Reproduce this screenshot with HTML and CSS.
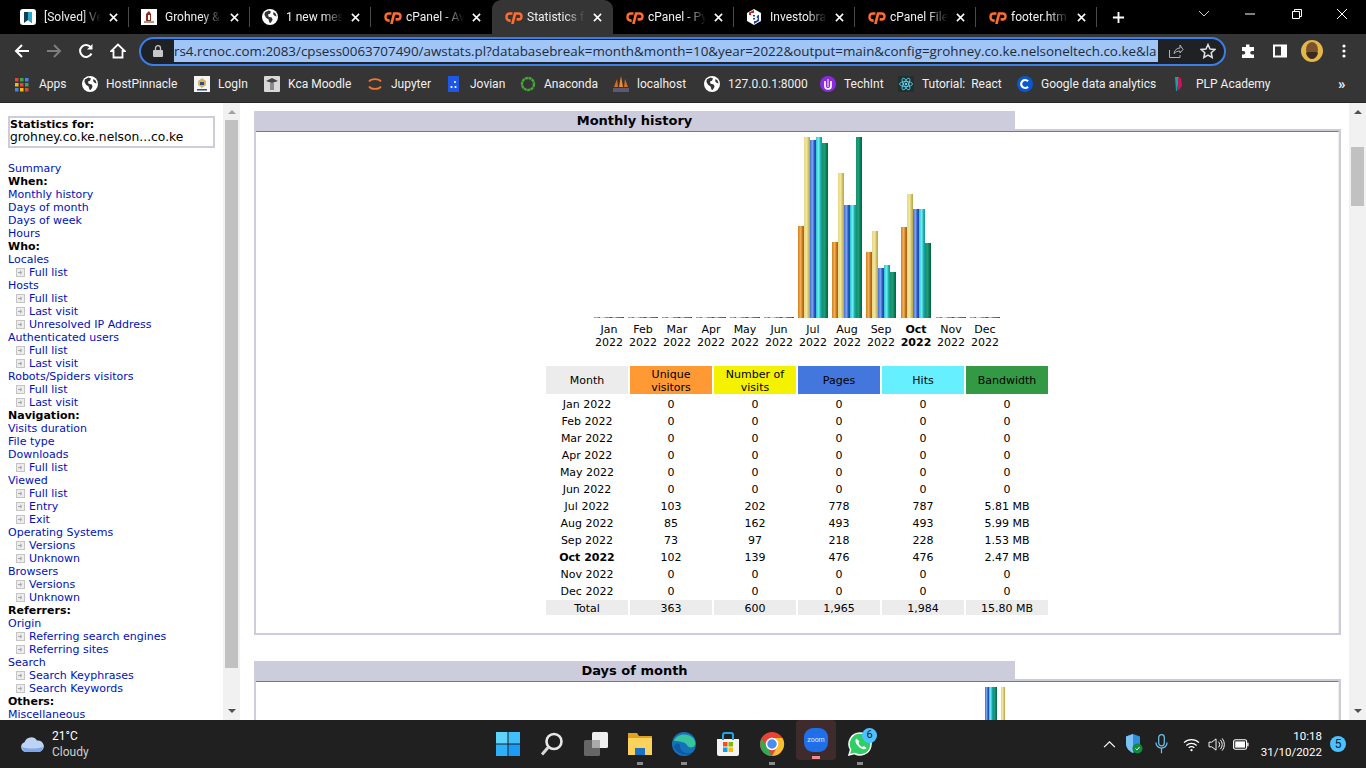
FILE: index.html
```html
<!DOCTYPE html>
<html lang="en">
<head>
<meta charset="utf-8">
<title>Statistics for grohney.co.ke</title>
<link rel="stylesheet" href="styles.css">
</head>
<body>
<svg class="defs" width="0" height="0" aria-hidden="true">
  <symbol id="cp" viewBox="0 0 16 12">
    <path d="M6.600 2.300H4.200a3.300 3.300 0 0 0 0 6.600H4.900" fill="none" stroke="#ff6c2c" stroke-width="2.500"/>
    <path d="M6.500 12 9 2.300h3.400a2.600 2.600 0 0 1 0 5.400H10.400" fill="none" stroke="#ff6c2c" stroke-width="2.500"/>
  </symbol>
  <symbol id="globe" viewBox="0 0 16 16">
    <circle cx="8" cy="8" r="8" fill="#fff"/>
    <path d="M3 3.200 6.800 1.400l2.200 1.200-1 2.200-2 .6.600 2.400 3.200.8.800 2.200-2 3.200-1.200-.4-.8-3-2.600-1.800-1.600-3zM11.400 3l2.200 1.600 1 3-1.600-.6-1.800-1.600z" fill="#353535"/>
  </symbol>
  <symbol id="close" viewBox="0 0 10 10">
    <path d="M1 1l8 8M9 1l-8 8" stroke="#fff" stroke-width="1.700" fill="none"/>
  </symbol>
  <symbol id="mini" viewBox="0 0 9 9">
    <rect x=".5" y=".5" width="8" height="8" fill="#ededed" stroke="#c4c4c4"/>
    <path d="M2 4.500h3M4 2.800l2 1.700-2 1.700" stroke="#a6a6a6" fill="none"/>
  </symbol>
</svg>

<div class="app">
  <header class="tabs">
    <div class="tab">
      <svg class="fav" viewBox="0 0 16 16"><rect width="16" height="16" rx="3" fill="#fff"/><path d="M4 3h8v11l-4-3-4 3z" fill="#123f5c"/><path d="M8 3h4v11l-4-3z" fill="#2aa9c9"/></svg>
      <span class="title">[Solved] Ve</span><svg class="x" viewBox="0 0 10 10"><use href="#close"/></svg>
    </div>
    <div class="tab">
      <svg class="fav" viewBox="0 0 16 16"><rect width="16" height="16" fill="#fff"/><path d="M5 13V5l3-3 2 3v8z" fill="#8f2a22"/><path d="M3 14h10v-2H3z" fill="#a89a80"/><path d="M7 6h2v5H7z" fill="#fff"/></svg>
      <span class="title">Grohney &amp;</span><svg class="x" viewBox="0 0 10 10"><use href="#close"/></svg>
    </div>
    <div class="tab">
      <svg class="fav" viewBox="0 0 16 16"><use href="#globe"/></svg>
      <span class="title">1 new mes</span><svg class="x" viewBox="0 0 10 10"><use href="#close"/></svg>
    </div>
    <div class="tab tab-nosep">
      <svg class="fav fav-cp" viewBox="0 0 16 12"><use href="#cp"/></svg>
      <span class="title">cPanel - Av</span><svg class="x" viewBox="0 0 10 10"><use href="#close"/></svg>
    </div>
    <div class="tab tab-active">
      <svg class="fav fav-cp" viewBox="0 0 16 12"><use href="#cp"/></svg>
      <span class="title">Statistics fo</span><svg class="x" viewBox="0 0 10 10"><use href="#close"/></svg>
    </div>
    <div class="tab">
      <svg class="fav fav-cp" viewBox="0 0 16 12"><use href="#cp"/></svg>
      <span class="title">cPanel - Py</span><svg class="x" viewBox="0 0 10 10"><use href="#close"/></svg>
    </div>
    <div class="tab">
      <svg class="fav" viewBox="0 0 16 16"><path d="M8 0l7 4v8l-7 4-7-4V4z" fill="#fff"/><path d="M3 3.500 8 1v5H3z" fill="#c8202c"/><path d="M8 6h5v6l-5 3z" fill="#1f3f9e"/><path d="M5 4h5l2 2-1.500 2 1.500 2-2 2H5z" fill="#fff"/><path d="M7 6h2v1.400H7zM7 9h2v1.400H7z" fill="#1f3f9e"/></svg>
      <span class="title">Investobra</span><svg class="x" viewBox="0 0 10 10"><use href="#close"/></svg>
    </div>
    <div class="tab">
      <svg class="fav fav-cp" viewBox="0 0 16 12"><use href="#cp"/></svg>
      <span class="title">cPanel File</span><svg class="x" viewBox="0 0 10 10"><use href="#close"/></svg>
    </div>
    <div class="tab">
      <svg class="fav fav-cp" viewBox="0 0 16 12"><use href="#cp"/></svg>
      <span class="title">footer.htm</span><svg class="x" viewBox="0 0 10 10"><use href="#close"/></svg>
    </div>
    <svg class="plus" viewBox="0 0 14 14"><path d="M7 1v12M1 7h12" stroke="#fff" stroke-width="2"/></svg>
    <div class="winctl">
      <svg viewBox="0 0 46 14"><path d="M18 4l5 5 5-5" stroke="#ccc" fill="none"/></svg>
      <svg viewBox="0 0 46 14"><path d="M18 7h10" stroke="#fff"/></svg>
      <svg viewBox="0 0 46 14"><path d="M19.500 4.500h7v7h-7zM21.500 4.500v-2h7v7h-2" stroke="#fff" fill="none"/></svg>
      <svg viewBox="0 0 46 14"><path d="M18 2l10 10M28 2 18 12" stroke="#fff" fill="none"/></svg>
    </div>
  </header>

  <div class="toolbar">
    <span class="btn"><svg viewBox="0 0 16 16"><path d="M15 8H2M8 2 2 8l6 6" stroke="#fff" stroke-width="2" fill="none"/></svg></span>
    <span class="btn"><svg viewBox="0 0 16 16"><path d="M1 8h13M8 2l6 6-6 6" stroke="#7d7d7d" stroke-width="2" fill="none"/></svg></span>
    <span class="btn"><svg viewBox="0 0 16 16"><path d="M13.500 10.500A6 6 0 1 1 13 4.500" stroke="#fff" stroke-width="2" fill="none"/><path d="M14.500 1v5.500H9z" fill="#fff"/></svg></span>
    <span class="btn"><svg viewBox="0 0 16 16"><path d="M8 1.500 1.200 8H3.500v6.500h9V8h2.300z" stroke="#fff" stroke-width="1.800" fill="none"/></svg></span>
    <div class="urlbar">
      <svg class="lock" viewBox="0 0 10 12"><rect y="5" width="10" height="7" rx="1" fill="#c4c7c5"/><path d="M2.500 5V3.200a2.500 2.500 0 0 1 5 0V5" stroke="#c4c7c5" stroke-width="1.300" fill="none"/></svg>
      <div class="urlclip"><span class="urltext">rs4.rcnoc.com:2083/cpsess0063707490/awstats.pl?databasebreak=month&amp;month=10&amp;year=2022&amp;output=main&amp;config=grohney.co.ke.nelsoneltech.co.ke&amp;la</span></div>
      <svg class="share" viewBox="0 0 16 16"><path d="M1.500 7v7.500h10.500V12M6 10.500C6.500 7 9 5 12 5V2l3 4.500L12 10V8c-2.500 0-4.500 1-6 2.500z" stroke="#b5b5b5" fill="none"/></svg>
      <svg class="star" viewBox="0 0 16 16"><path d="M8 1.500l2 4.500 4.800.5-3.600 3.200 1 4.800L8 12.100l-4.200 2.400 1-4.800L1.200 6.500 6 6z" stroke="#e3e3e3" stroke-width="1.500" fill="none"/></svg>
    </div>
    <span class="btn btn-first"><svg viewBox="0 0 16 16"><path d="M6 1.500h3.500V4H14v4h-2a1.800 1.800 0 0 0 0 3.600h2V15H2v-3.500h1.500a1.800 1.800 0 0 0 0-3.600H2V4h4z" fill="#fff"/></svg></span>
    <span class="btn"><svg viewBox="0 0 16 16"><rect x="1" y="1.500" width="14" height="13" fill="#fff"/><rect x="3" y="3.500" width="6" height="9" fill="#353535"/></svg></span>
    <span class="btn"><svg class="avatar" viewBox="0 0 22 22"><circle cx="11" cy="11" r="11" fill="#e2b649"/><ellipse cx="11" cy="10" rx="6" ry="8" fill="#7a5230"/><path d="M5 13c2 8 10 8 12 0l-2-1H7z" fill="#3a2a1e"/></svg></span>
    <span class="btn"><svg viewBox="0 0 16 16"><circle cx="8" cy="3" r="1.600" fill="#fff"/><circle cx="8" cy="8" r="1.600" fill="#fff"/><circle cx="8" cy="13" r="1.600" fill="#fff"/></svg></span>
  </div>

  <nav class="bookmarks">
    <span class="bm"><svg class="bmi" viewBox="0 0 16 16"><path d="M0 2h3.500v3.500H0z" fill="#ea4335"/><path d="M5 2h3.500v3.500H5z" fill="#34a853"/><path d="M10 2h3.500v3.500H10z" fill="#4285f4"/><path d="M0 7h3.500v3.500H0z" fill="#fbbc04"/><path d="M5 7h3.500v3.500H5z" fill="#ea4335"/><path d="M10 7h3.500v3.500H10z" fill="#34a853"/><path d="M0 12h3.500v3.500H0z" fill="#4285f4"/><path d="M5 12h3.500v3.500H5z" fill="#fbbc04"/><path d="M10 12h3.500v3.500H10z" fill="#ea4335"/></svg>Apps</span>
    <span class="bm"><svg class="bmi" viewBox="0 0 16 16"><use href="#globe"/></svg>HostPinnacle</span>
    <span class="bm"><svg class="bmi" viewBox="0 0 16 16"><rect width="16" height="16" fill="#f4f4f4"/><path d="M8 2l4 3v4l-4 3-4-3V5z" fill="#d7b658"/><path d="M6 6h4v3H6z" fill="#2e4b8f"/><path d="M3 13h10v1.500H3z" fill="#2e4b8f"/></svg>LogIn</span>
    <span class="bm"><svg class="bmi" viewBox="0 0 16 16"><rect width="16" height="16" rx="1" fill="#d8d8d8"/><path d="M2 5l6-3 6 3-6 2z" fill="#444"/><path d="M6 7h4v7H6z" fill="#8a8a8a"/></svg>Kca Moodle</span>
    <span class="bm"><svg class="bmi" viewBox="0 0 16 16"><path d="M2 5.500a6.500 4 0 0 1 12 0M2 10.500a6.500 4 0 0 0 12 0" stroke="#f37726" stroke-width="1.800" fill="none"/></svg>Jupyter</span>
    <span class="bm"><svg class="bmi" viewBox="0 0 16 16"><rect x="2" width="11" height="16" fill="#1f57e7"/><circle cx="9" cy="6" r="1.100" fill="#fff"/><circle cx="5.500" cy="11" r="1.100" fill="#fff"/><circle cx="9.500" cy="11" r="1.100" fill="#fff"/></svg>Jovian</span>
    <span class="bm"><svg class="bmi" viewBox="0 0 16 16"><circle cx="8" cy="8" r="6" stroke="#44a833" stroke-width="2.400" fill="none" stroke-dasharray="3 .5"/></svg>Anaconda</span>
    <span class="bm"><svg class="bmi" viewBox="0 0 16 16"><path d="M8 0l2 11H6z" fill="#f28c28"/><path d="M4 3l1 8H1zM12 3l3 8h-4z" fill="#d96f1c"/><path d="M0 12h16v4H0z" fill="#5a5a78"/></svg>localhost</span>
    <span class="bm"><svg class="bmi" viewBox="0 0 16 16"><use href="#globe"/></svg>127.0.0.1:8000</span>
    <span class="bm"><svg class="bmi" viewBox="0 0 16 16"><circle cx="8" cy="8" r="8" fill="#8a2be2"/><path d="M5 5v5a3 3 0 0 0 6 0V5" stroke="#fff" stroke-width="1.700" fill="none"/><path d="M8 3v8" stroke="#fff"/></svg>TechInt</span>
    <span class="bm"><svg class="bmi" viewBox="0 0 16 16"><rect width="16" height="16" rx="2" fill="#20302f"/><g fill="none" stroke="#61dafb" stroke-width=".8"><ellipse cx="8" cy="8" rx="6.500" ry="2.500"/><ellipse cx="8" cy="8" rx="6.500" ry="2.500" transform="rotate(60 8 8)"/><ellipse cx="8" cy="8" rx="6.500" ry="2.500" transform="rotate(120 8 8)"/></g><circle cx="8" cy="8" r="1.200" fill="#61dafb"/></svg>Tutorial:&nbsp; React</span>
    <span class="bm"><svg class="bmi" viewBox="0 0 16 16"><circle cx="8" cy="8" r="8" fill="#0b57d0"/><path d="M11 5.200a4 4 0 1 0 0 5.600" stroke="#fff" stroke-width="2.200" fill="none"/></svg>Google data analytics</span>
    <span class="bm"><svg class="bmi" viewBox="0 0 16 16"><path d="M3 1h4L5 15H4z" fill="#12a5a0"/><path d="M6 2h3l1 8-4 5z" fill="#c2185b"/><path d="M10 8l4 2-4 2z" fill="#4a2a3a"/></svg>PLP Academy</span>
    <span class="more">»</span>
  </nav>

  <main class="page">
    <aside class="side">
      <div class="side-body">
        <div class="statbox"><b>Statistics for:</b><br>grohney.co.ke.nelson...co.ke</div>
        <ul class="menu">
          <li><a href="#a">Summary</a></li>
          <li class="head">When:</li>
          <li><a href="#a">Monthly history</a></li>
          <li><a href="#a">Days of month</a></li>
          <li><a href="#a">Days of week</a></li>
          <li><a href="#a">Hours</a></li>
          <li class="head">Who:</li>
          <li><a href="#a">Locales</a></li>
          <li class="sub"><svg viewBox="0 0 9 9"><use href="#mini"/></svg><a href="#a">Full list</a></li>
          <li><a href="#a">Hosts</a></li>
          <li class="sub"><svg viewBox="0 0 9 9"><use href="#mini"/></svg><a href="#a">Full list</a></li>
          <li class="sub"><svg viewBox="0 0 9 9"><use href="#mini"/></svg><a href="#a">Last visit</a></li>
          <li class="sub"><svg viewBox="0 0 9 9"><use href="#mini"/></svg><a href="#a">Unresolved IP Address</a></li>
          <li><a href="#a">Authenticated users</a></li>
          <li class="sub"><svg viewBox="0 0 9 9"><use href="#mini"/></svg><a href="#a">Full list</a></li>
          <li class="sub"><svg viewBox="0 0 9 9"><use href="#mini"/></svg><a href="#a">Last visit</a></li>
          <li><a href="#a">Robots/Spiders visitors</a></li>
          <li class="sub"><svg viewBox="0 0 9 9"><use href="#mini"/></svg><a href="#a">Full list</a></li>
          <li class="sub"><svg viewBox="0 0 9 9"><use href="#mini"/></svg><a href="#a">Last visit</a></li>
          <li class="head">Navigation:</li>
          <li><a href="#a">Visits duration</a></li>
          <li><a href="#a">File type</a></li>
          <li><a href="#a">Downloads</a></li>
          <li class="sub"><svg viewBox="0 0 9 9"><use href="#mini"/></svg><a href="#a">Full list</a></li>
          <li><a href="#a">Viewed</a></li>
          <li class="sub"><svg viewBox="0 0 9 9"><use href="#mini"/></svg><a href="#a">Full list</a></li>
          <li class="sub"><svg viewBox="0 0 9 9"><use href="#mini"/></svg><a href="#a">Entry</a></li>
          <li class="sub"><svg viewBox="0 0 9 9"><use href="#mini"/></svg><a href="#a">Exit</a></li>
          <li><a href="#a">Operating Systems</a></li>
          <li class="sub"><svg viewBox="0 0 9 9"><use href="#mini"/></svg><a href="#a">Versions</a></li>
          <li class="sub"><svg viewBox="0 0 9 9"><use href="#mini"/></svg><a href="#a">Unknown</a></li>
          <li><a href="#a">Browsers</a></li>
          <li class="sub"><svg viewBox="0 0 9 9"><use href="#mini"/></svg><a href="#a">Versions</a></li>
          <li class="sub"><svg viewBox="0 0 9 9"><use href="#mini"/></svg><a href="#a">Unknown</a></li>
          <li class="head">Referrers:</li>
          <li><a href="#a">Origin</a></li>
          <li class="sub"><svg viewBox="0 0 9 9"><use href="#mini"/></svg><a href="#a">Referring search engines</a></li>
          <li class="sub"><svg viewBox="0 0 9 9"><use href="#mini"/></svg><a href="#a">Referring sites</a></li>
          <li><a href="#a">Search</a></li>
          <li class="sub"><svg viewBox="0 0 9 9"><use href="#mini"/></svg><a href="#a">Search Keyphrases</a></li>
          <li class="sub"><svg viewBox="0 0 9 9"><use href="#mini"/></svg><a href="#a">Search Keywords</a></li>
          <li class="head">Others:</li>
          <li><a href="#a">Miscellaneous</a></li>
        </ul>
      </div>
      <div class="sb">
        <span class="arrow up faint"></span>
        <span class="thumb thumb-side"></span>
        <span class="arrow down"></span>
      </div>
    </aside>

    <section class="content">
      <div class="content-body">
        <h2 class="sec-title">Monthly history</h2>
        <div class="sec-box">
          <div class="sec-inner sec-inner-first">
            <div class="chart">
              <div class="mcol"><div class="bars"><i class="b o zero"></i><i class="b y zero"></i><i class="b p zero"></i><i class="b h zero"></i><i class="b k zero"></i></div><div class="lab">Jan<br>2022</div></div>
              <div class="mcol"><div class="bars"><i class="b o zero"></i><i class="b y zero"></i><i class="b p zero"></i><i class="b h zero"></i><i class="b k zero"></i></div><div class="lab">Feb<br>2022</div></div>
              <div class="mcol"><div class="bars"><i class="b o zero"></i><i class="b y zero"></i><i class="b p zero"></i><i class="b h zero"></i><i class="b k zero"></i></div><div class="lab">Mar<br>2022</div></div>
              <div class="mcol"><div class="bars"><i class="b o zero"></i><i class="b y zero"></i><i class="b p zero"></i><i class="b h zero"></i><i class="b k zero"></i></div><div class="lab">Apr<br>2022</div></div>
              <div class="mcol"><div class="bars"><i class="b o zero"></i><i class="b y zero"></i><i class="b p zero"></i><i class="b h zero"></i><i class="b k zero"></i></div><div class="lab">May<br>2022</div></div>
              <div class="mcol"><div class="bars"><i class="b o zero"></i><i class="b y zero"></i><i class="b p zero"></i><i class="b h zero"></i><i class="b k zero"></i></div><div class="lab">Jun<br>2022</div></div>
              <div class="mcol"><div class="bars"><i class="b o" style="height:92px"></i><i class="b y" style="height:181px"></i><i class="b p" style="height:178px"></i><i class="b h" style="height:181px"></i><i class="b k" style="height:175px"></i></div><div class="lab">Jul<br>2022</div></div>
              <div class="mcol"><div class="bars"><i class="b o" style="height:76px"></i><i class="b y" style="height:145px"></i><i class="b p" style="height:113px"></i><i class="b h" style="height:113px"></i><i class="b k" style="height:181px"></i></div><div class="lab">Aug<br>2022</div></div>
              <div class="mcol"><div class="bars"><i class="b o" style="height:66px"></i><i class="b y" style="height:87px"></i><i class="b p" style="height:50px"></i><i class="b h" style="height:53px"></i><i class="b k" style="height:46px"></i></div><div class="lab">Sep<br>2022</div></div>
              <div class="mcol mcol-cur"><div class="bars"><i class="b o" style="height:91px"></i><i class="b y" style="height:124px"></i><i class="b p" style="height:109px"></i><i class="b h" style="height:109px"></i><i class="b k" style="height:75px"></i></div><div class="lab">Oct<br>2022</div></div>
              <div class="mcol"><div class="bars"><i class="b o zero"></i><i class="b y zero"></i><i class="b p zero"></i><i class="b h zero"></i><i class="b k zero"></i></div><div class="lab">Nov<br>2022</div></div>
              <div class="mcol"><div class="bars"><i class="b o zero"></i><i class="b y zero"></i><i class="b p zero"></i><i class="b h zero"></i><i class="b k zero"></i></div><div class="lab">Dec<br>2022</div></div>
            </div>
            <table class="stats">
              <thead>
                <tr><th>Month</th><th class="c-o">Unique<br>visitors</th><th class="c-y">Number of<br>visits</th><th class="c-p">Pages</th><th class="c-h">Hits</th><th class="c-k">Bandwidth</th></tr>
              </thead>
              <tbody>
                <tr><td>Jan 2022</td><td>0</td><td>0</td><td>0</td><td>0</td><td>0</td></tr>
                <tr><td>Feb 2022</td><td>0</td><td>0</td><td>0</td><td>0</td><td>0</td></tr>
                <tr><td>Mar 2022</td><td>0</td><td>0</td><td>0</td><td>0</td><td>0</td></tr>
                <tr><td>Apr 2022</td><td>0</td><td>0</td><td>0</td><td>0</td><td>0</td></tr>
                <tr><td>May 2022</td><td>0</td><td>0</td><td>0</td><td>0</td><td>0</td></tr>
                <tr><td>Jun 2022</td><td>0</td><td>0</td><td>0</td><td>0</td><td>0</td></tr>
                <tr><td>Jul 2022</td><td>103</td><td>202</td><td>778</td><td>787</td><td>5.81 MB</td></tr>
                <tr><td>Aug 2022</td><td>85</td><td>162</td><td>493</td><td>493</td><td>5.99 MB</td></tr>
                <tr><td>Sep 2022</td><td>73</td><td>97</td><td>218</td><td>228</td><td>1.53 MB</td></tr>
                <tr><td class="cur">Oct 2022</td><td>102</td><td>139</td><td>476</td><td>476</td><td>2.47 MB</td></tr>
                <tr><td>Nov 2022</td><td>0</td><td>0</td><td>0</td><td>0</td><td>0</td></tr>
                <tr><td>Dec 2022</td><td>0</td><td>0</td><td>0</td><td>0</td><td>0</td></tr>
              </tbody>
              <tfoot>
                <tr><td>Total</td><td>363</td><td>600</td><td>1,965</td><td>1,984</td><td>15.80 MB</td></tr>
              </tfoot>
            </table>
          </div>
        </div>

        <h2 class="sec-title sec-title-next">Days of month</h2>
        <div class="sec-box">
          <div class="sec-inner">
            <div class="days">
              <i class="d p"></i><i class="d h"></i><i class="d k"></i><i class="d gap"></i><i class="d y"></i>
            </div>
          </div>
        </div>
      </div>
      <div class="sb">
        <span class="arrow up"></span>
        <span class="thumb thumb-main"></span>
        <span class="arrow down"></span>
      </div>
    </section>
  </main>

  <footer class="taskbar">
    <div class="weather">
      <svg class="cloud" viewBox="0 0 24 18"><path d="M6 17a5 5 0 0 1-1.500-9.700A7 7 0 0 1 17 5.500 5.500 5.500 0 0 1 19 17z" fill="#bcd3f4"/><path d="M2 12c6 2 14 2 21 0-.5 3-2 5-4 5H6c-2 0-3.500-2-4-5z" fill="#7ea6e8"/></svg>
      <div class="wtext"><span>21°C</span><span class="dim">Cloudy</span></div>
    </div>
    <div class="apps">
      <span class="ti"><svg viewBox="0 0 24 24"><path d="M0 0h11.500v11.500H0z" fill="#5fd3fb"/><path d="M12.500 0H24v11.500H12.500z" fill="#40bffa"/><path d="M0 12.500h11.500V24H0z" fill="#2eb0f8"/><path d="M12.500 12.500H24V24H12.500z" fill="#1a9bf5"/></svg></span>
      <span class="ti"><svg viewBox="0 0 24 24"><circle cx="14" cy="9.500" r="7.500" stroke="#e8e8e8" stroke-width="2.600" fill="#202020"/><path d="M8.500 15 2 22.500" stroke="#d8d8d8" stroke-width="3"/></svg></span>
      <span class="ti"><svg viewBox="0 0 24 24"><rect y="8" width="16" height="16" rx="1.500" fill="#666"/><rect x="8" width="16" height="16" rx="1.500" fill="#eee"/><rect x="8" y="8" width="8" height="8" fill="#aaa"/></svg></span>
      <span class="ti ti-on"><svg viewBox="0 0 24 24"><path d="M0 1h9l2 3h13v19H0z" fill="#e0a31c"/><path d="M0 6h24v17H0z" fill="#fbd35c"/><path d="M7 16h10v7H7z" fill="#1d72c4"/></svg></span>
      <span class="ti ti-on"><svg viewBox="0 0 24 24"><circle cx="12" cy="12" r="12" fill="#1373b8"/><path d="M2 9C4 2 15 0 21 6c3 3 3 8 0 9-3 1-5 0-6-2-2-3-7-4-13-4z" fill="#39c4a0"/><path d="M8 14c0 6 7 9 13 6-4 4-15 4-19-5 0-4 6-5 6-1z" fill="#0c59a4"/></svg></span>
      <span class="ti"><svg viewBox="0 0 24 24"><path d="M1 7h22v15a2 2 0 0 1-2 2H3a2 2 0 0 1-2-2z" fill="#f3f3f3"/><path d="M7 8V3a2 2 0 0 1 2-2h6a2 2 0 0 1 2 2v5" stroke="#1fa5e8" stroke-width="2" fill="none"/><path d="M7 10h4.500v4.500H7z" fill="#f25022"/><path d="M12.500 10H17v4.500h-4.500z" fill="#7fba00"/><path d="M7 15.500h4.500V20H7z" fill="#00a4ef"/><path d="M12.500 15.500H17V20h-4.500z" fill="#ffb900"/></svg></span>
      <span class="ti ti-on"><svg viewBox="0 0 24 24"><circle cx="12" cy="12" r="12" fill="#ea4335"/><path d="M12 6h10.500A12 12 0 0 1 12 24l5-9z" fill="#fbc02d"/><path d="M1.500 6.500 7 15l5 9A12 12 0 0 1 1.500 6.500z" fill="#34a853"/><circle cx="12" cy="12" r="5.500" fill="#4a8df0" stroke="#fff" stroke-width="1.500"/></svg></span>
      <span class="ti ti-zoom"><span class="zoomlogo">zoom</span></span>
      <span class="ti ti-on ti-wa"><svg viewBox="0 0 24 24"><path d="M12 1a11 11 0 0 0-9.400 16.700L1 23l5.500-1.500A11 11 0 1 0 12 1z" fill="#2fcf66" stroke="#fff" stroke-width="1.500"/><path d="M8.500 6.500c-2 1.500-1 5 2 8s6.500 3.500 8 1.500l-2.500-2-1.500 1c-1.500-.5-3.500-2.500-4-4l1-1.500z" fill="#fff"/></svg><span class="badge-wa">6</span></span>
    </div>
    <div class="tray">
      <svg class="tr" viewBox="0 0 14 10"><path d="M1 8l6-6 6 6" stroke="#fff" stroke-width="1.300" fill="none"/></svg>
      <svg class="tr tr-shield" viewBox="0 0 18 20"><path d="M8 0l7 2.500V9c0 5-3 8-7 10-4-2-7-5-7-10V2.500z" fill="#2f8fdc"/><path d="M8 0v19C4 17 1 14 1 9V2.500z" fill="#7cc3f5"/><circle cx="12.500" cy="14.500" r="5" fill="#118c3b"/><path d="M10.500 14.500l1.500 1.500 2.500-3" stroke="#fff" fill="none"/></svg>
      <svg class="tr tr-mic" viewBox="0 0 14 22"><rect x="4" y="1" width="6" height="12" rx="3" stroke="#6cc4f0" fill="none" stroke-width="1.300"/><path d="M1 9.500a6 6 0 0 0 12 0M7 16v5" stroke="#6cc4f0" fill="none" stroke-width="1.300"/></svg>
      <svg class="tr tr-wifi" viewBox="0 0 18 16"><path d="M1 6a11.500 11.500 0 0 1 16 0M3.500 9a8 8 0 0 1 11 0M6 11.500a4.500 4.500 0 0 1 6 0" stroke="#fff" fill="none" stroke-width="1.300"/><circle cx="9" cy="14" r="1.200" fill="#fff"/></svg>
      <svg class="tr tr-vol" viewBox="0 0 18 16"><path d="M1 5.500h3L8.500 2v12L4 10.500H1z" stroke="#fff" fill="none"/><path d="M11 5a4 4 0 0 1 0 6M13 3a7 7 0 0 1 0 10M15 1.500a10 10 0 0 1 0 13" stroke="#fff" fill="none"/></svg>
      <svg class="tr tr-bat" viewBox="0 0 18 12"><rect x=".7" y=".7" width="14.600" height="10.600" rx="2" stroke="#fff" fill="none" stroke-width="1.300"/><rect x="2.500" y="2.500" width="11" height="7" fill="#fff"/><rect x="16" y="4" width="1.500" height="4" fill="#fff"/></svg>
      <div class="clock"><span>10:18</span><span>31/10/2022</span></div>
      <span class="notif">5</span>
    </div>
  </footer>
</div>
</body>
</html>
```
FILE: styles.css
```css
* { box-sizing: border-box; }
html, body { margin: 0; padding: 0; height: 100%; overflow: hidden; }
body { font-family: Roboto, "Open Sans", sans-serif; background: #353535; }
.defs { display: block; height: 0; }

.app { display: flex; flex-direction: column; width: 1366px; height: 768px; }

/* tab strip */
.tabs { display: flex; align-items: center; height: 34px; padding-left: 8px; background: #000; color: #f0f0f0; font-size: 12px; }
.tab { display: flex; align-items: center; width: 121px; height: 34px; padding-left: 12px; flex: none; background: linear-gradient(#4a4a4a, #4a4a4a) right center / 1px 20px no-repeat; }
.tab-nosep { background: none; }
.tab-active { background: #353535; border-radius: 9px 9px 0 0; }
.fav { width: 16px; height: 16px; margin-right: 8px; flex: none; }
.fav-cp { width: 18px; height: 13px; margin-left: 1px; margin-right: 4px; }
.title { width: 57px; white-space: nowrap; -webkit-mask-image: linear-gradient(90deg, #000 65%, transparent 100%); mask-image: linear-gradient(90deg, #000 65%, transparent 100%); }
.fav-cp + .title { width: 58px; }
.x { width: 9px; height: 9px; margin-left: 8px; flex: none; }
.plus { width: 13px; height: 13px; margin-left: 15px; flex: none; }
.winctl { display: flex; margin-left: 56px; flex: none; }
.winctl svg { width: 46px; height: 14px; margin-top: -6px; }

/* toolbar */
.toolbar { display: flex; align-items: center; height: 34px; padding-left: 6px; background: #353535; }
.btn { display: flex; align-items: center; justify-content: center; width: 32px; height: 32px; flex: none; }
.btn svg { width: 16px; height: 16px; }
.btn .avatar { width: 22px; height: 22px; }
.btn-first { margin-left: 6px; }
.urlbar { display: flex; align-items: center; width: 1087px; height: 29px; margin-left: 5px; padding-left: 12px; flex: none; background: #202124; border: 2px solid #3a7fe6; border-radius: 15px; }
.lock { width: 10px; height: 12px; flex: none; }
.urlclip { width: 984px; height: 22px; margin-left: 11px; background: #a1c6f5; flex: none; }
.urltext { display: block; white-space: nowrap; color: #1f2b3a; font-family: "Open Sans", sans-serif; font-size: 13.380px; line-height: 22px; }
.share { width: 16px; height: 16px; margin-left: 10px; flex: none; }
.star { width: 16px; height: 16px; margin-left: 16px; flex: none; }

/* bookmarks */
.bookmarks { display: grid; grid-template-columns: 67px 112px 70px 103px 79px 74px 93px 91px 116px 78px 119px 155px 166px 1fr; align-items: center; height: 35px; padding: 0 0 3px 15px; background: #353535; border-bottom: 1px solid #262626; color: #f0f0f0; font-size: 12px; }
.bm { display: flex; align-items: center; white-space: nowrap; }
.bmi { width: 16px; height: 16px; margin-right: 8px; flex: none; }
.more { font-size: 15px; font-weight: bold; }

/* page frames */
.page { display: flex; flex: 1; min-height: 0; background: #fff; font-family: "DejaVu Sans", Verdana, sans-serif; font-size: 11px; line-height: 13px; color: #000; }
.side { display: flex; width: 240px; flex: none; }
.side-body { width: 223px; height: 100%; overflow: hidden; padding: 13px 0 0 8px; }
.statbox { width: 207px; height: 32px; border: 2px solid #ccccdd; font-size: 12.300px; line-height: 13px; white-space: nowrap; }
.statbox b { font-size: 11px; }
.menu { list-style: none; margin: 14px 0 0; padding: 0; }
.menu a { color: #0011bb; text-decoration: none; }
.head { font-weight: bold; }
.sub { display: flex; align-items: center; height: 13px; padding-left: 8px; }
.sub svg { width: 9px; height: 9px; margin-right: 4px; flex: none; }

/* scrollbars */
.sb { display: flex; flex-direction: column; align-items: center; width: 17px; height: 100%; flex: none; background: #f1f1f1; }
.arrow { width: 0; height: 0; border-left: 4px solid transparent; border-right: 4px solid transparent; flex: none; }
.up { border-bottom: 4px solid #505050; margin-top: 7px; }
.down { border-top: 4px solid #505050; margin-top: auto; margin-bottom: 7px; }
.faint { border-bottom-color: #a3a3a3; }
.thumb { display: block; width: 13px; background: #c1c1c1; flex: none; }
.thumb-side { height: 548px; margin-top: 6px; }
.thumb-main { height: 59px; margin-top: 33px; }

/* main */
.content { display: flex; flex: 1; min-width: 0; }
.content-body { flex: 1; height: 100%; overflow: hidden; padding: 8px 8px 0 14px; }
.sec-title { width: 761px; height: 20px; margin: 0; background: #ccccdd; font-size: 13px; line-height: 20px; font-weight: bold; text-align: center; color: #000; }
.sec-title-next { margin-top: 26px; }
.sec-box { margin-top: -2px; border: 2px solid #ccccdd; }
.sec-inner { border-top: 1px solid #77777f; border-right: 1px solid #eeeeee; }
.sec-inner-first { height: 502px; padding-top: 5px; }

.chart { display: flex; margin-left: 336px; }
.mcol { width: 34px; flex: none; text-align: center; }
.mcol-cur { width: 36px; font-weight: bold; }
.bars { display: flex; align-items: flex-end; justify-content: center; height: 181px; }
.mcol-cur .bars { justify-content: flex-start; padding-left: 3px; }
.lab { margin-top: 5px; }
.b { display: block; width: 6px; }
.zero { height: 1px; }
.o { background: linear-gradient(90deg, #d08018, #f0b060 45%, #c5761a 75%, #a35f12); }
.y { background: linear-gradient(90deg, #e6d888, #f0e69c 45%, #d0bf62 75%, #b5a44a); }
.p { background: linear-gradient(90deg, #3f6fd8, #7fa2ee 40%, #2a56c4 75%, #1d44a8); }
.h { background: linear-gradient(90deg, #2fc4c8, #6ef0f2 45%, #22b0b4 75%, #109498); }
.k { background: linear-gradient(90deg, #14906a, #209c78 40%, #0a7a54 75%, #056042); }

.stats { margin: 15px 0 0 288px; width: 506px; table-layout: fixed; border-collapse: separate; border-spacing: 2px; }
.stats th { height: 28px; padding: 1px 0 0; font-weight: normal; background: #ececec; text-align: center; vertical-align: middle; }
.stats td { height: 15px; padding: 1px 0 0; text-align: center; }
.stats tfoot td { background: #ececec; }
.stats .cur { font-weight: bold; }
.stats .c-o { background: #ff9933; }
.stats .c-y { background: #f4f200; }
.stats .c-p { background: #4477dd; }
.stats .c-h { background: #66f0ff; }
.stats .c-k { background: #339944; }

.days { display: flex; margin: 5px 0 0 729px; }
.d { display: block; width: 4px; height: 120px; }
.gap { background: none; }

/* taskbar */
.taskbar { display: flex; align-items: center; height: 48px; flex: none; background: #202020; color: #fff; font-size: 12px; line-height: 16px; }
.weather { display: flex; align-items: center; width: 486px; padding-left: 20px; flex: none; }
.cloud { width: 24px; height: 18px; margin-right: 8px; }
.wtext { display: flex; flex-direction: column; }
.dim { color: #cfcfcf; }
.apps { display: flex; }
.ti { display: flex; align-items: center; justify-content: center; width: 44px; height: 48px; flex: none; background: none; }
.ti svg { width: 24px; height: 24px; overflow: visible; flex: none; }
.ti-on { background: linear-gradient(#8a8a8a, #8a8a8a) center 42px / 6px 3px no-repeat; }
.ti-zoom { width: 40px; height: 40px; margin: 0 2px; border-radius: 4px; background: #3f2a2c linear-gradient(#f08a94, #f08a94) center 36px / 8px 3px no-repeat; }
.zoomlogo { display: flex; align-items: center; justify-content: center; width: 24px; height: 24px; border-radius: 9px; background: #1f6fe8; color: #dfeaff; font-size: 7px; }
.badge-wa { display: flex; align-items: center; justify-content: center; width: 15px; height: 15px; margin: -18px -5px 0 -10px; border-radius: 50%; background: #4cc2ff; color: #10202c; font-size: 11px; flex: none; }
.tray { display: flex; align-items: center; margin-left: auto; padding-right: 20px; }
.tr { flex: none; }
.tr:first-child { width: 13px; height: 9px; }
.tr-shield { width: 18px; height: 20px; margin-left: 9px; }
.tr-mic { width: 13px; height: 22px; margin-left: 12px; }
.tr-wifi { width: 17px; height: 15px; margin-left: 15px; }
.tr-vol { width: 17px; height: 15px; margin-left: 8px; }
.tr-bat { width: 16px; height: 11px; margin-left: 8px; }
.clock { display: flex; flex-direction: column; align-items: flex-end; margin-left: 12px; font-size: 11.500px; }
.notif { display: flex; align-items: center; justify-content: center; width: 16px; height: 16px; margin-left: 8px; border-radius: 50%; background: #4cc2ff; color: #10202c; font-size: 12px; }
```
